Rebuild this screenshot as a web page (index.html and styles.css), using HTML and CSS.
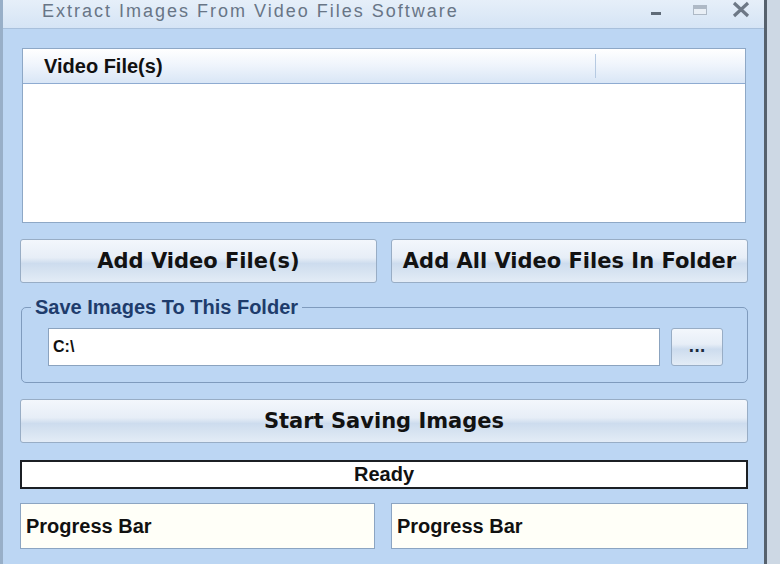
FILE: index.html
```html
<!DOCTYPE html>
<html lang="en">
<head>
  <meta charset="UTF-8">
  <title>Extract Images From Video Files Software</title>
  <link rel="stylesheet" href="styles.css">
</head>
<body>
  <div class="window">
    <div class="titlebar">
      <span class="title">Extract Images From Video Files Software</span>
      <div class="controls">
        <svg class="ctl-min" width="12" height="20" viewBox="0 0 12 20"><rect x="1" y="12" width="10" height="3" fill="#5f6b78"/></svg>
        <svg class="ctl-max" width="18" height="20" viewBox="0 0 18 20"><rect x="2.5" y="5.5" width="13" height="9" fill="#e9eff6" stroke="#aeb9c6"/><rect x="3" y="6" width="12" height="3" fill="#aeb9c6"/></svg>
        <svg class="ctl-close" width="20" height="20" viewBox="0 0 20 20"><path d="M3 3 L17 16 M17 3 L3 16" stroke="#6d7886" stroke-width="3.2"/></svg>
      </div>
    </div>

    <div class="content">
      <div class="filelist">
        <div class="list-header">
          <span class="col-name">Video File(s)</span>
          <span class="col-rest"></span>
        </div>
      </div>

      <div class="row buttons">
        <button class="btn big">Add Video File(s)</button>
        <button class="btn big">Add All Video Files In Folder</button>
      </div>

      <fieldset class="group">
        <legend>Save Images To This Folder</legend>
        <div class="folder-row">
          <input type="text" class="path" value="C:\">
          <button class="btn browse">...</button>
        </div>
      </fieldset>

      <button class="btn big start">Start Saving Images</button>

      <div class="status">Ready</div>

      <div class="row progress">
        <div class="bar">Progress Bar</div>
        <div class="bar">Progress Bar</div>
      </div>
    </div>
  </div>
</body>
</html>
```

FILE: styles.css
```css
body {
  margin: 0;
  background: #cdd8e4;
  font-family: "Liberation Sans", Arial, sans-serif;
}
.window {
  box-sizing: border-box;
  width: 767px;
  height: 564px;
  background: #bcd6f3; /* window body blue */
  border-left: 3px solid #98afc8;
  border-right: 3px solid #56616d;
  overflow: hidden;
}
.titlebar {
  height: 28px;
  border-bottom: 1px solid #a8c0dc;
  background: linear-gradient(#e6eff9, #d5e4f5);
  display: flex;
  align-items: center;
  justify-content: space-between;
}
.title {
  margin-left: 39px;
  margin-top: -6px;
  font-size: 18px;
  letter-spacing: 2px;
  color: #687586;
}
.controls {
  display: flex;
  align-items: flex-start;
  margin-right: 13px;
  margin-top: -8px;
}
.ctl-min { margin-right: 29px; }
.ctl-max { margin-right: 22px; }

.content {
  padding: 0 16px 0 17px;
  display: flex;
  flex-direction: column;
}
.filelist {
  margin: 19px 2px 0 2px;
  height: 175px;
  box-sizing: border-box;
  border: 1px solid #8ea8c6;
  background: #fff;
}
.list-header {
  height: 34px;
  display: flex;
  align-items: center;
  border-bottom: 1px solid #8eabd1;
  background: linear-gradient(#ffffff, #f0f5fc 45%, #d9e6f6);
}
.col-name {
  width: 573px;
  padding-left: 21px;
  box-sizing: border-box;
  font-size: 20px;
  font-weight: bold;
  color: #111;
  border-right: 1px solid #b6cae2;
  line-height: 24px;
}

.row {
  display: flex;
}
.buttons {
  margin-top: 16px;
  gap: 14px;
}
.btn {
  box-sizing: border-box;
  border: 1px solid #98adc5;
  border-radius: 3px;
  background: linear-gradient(#f3f7fc 0%, #e7eef7 42%, #cddcee 56%, #d9e5f2 80%, #e3ecf6 100%);
  color: #121212;
  font-family: "DejaVu Sans", Tahoma, sans-serif;
  font-weight: bold;
  padding: 0;
  cursor: pointer;
}
.big {
  height: 44px;
  font-size: 21px;
}
.buttons .btn {
  flex: 1;
}

.group {
  margin: 14px 0 0 1px;
  padding: 11px 24px 16px 26px;
  border: 1px solid #7f9bbd;
  border-radius: 5px;
  min-width: 0;
}
.group legend {
  margin-left: -17px;
  padding: 0 4px;
  font-size: 20px;
  line-height: 20px;
  font-weight: bold;
  color: #1e3c6c;
}
.folder-row {
  display: flex;
  gap: 11px;
}
.path {
  box-sizing: border-box;
  width: 612px;
  height: 38px;
  border: 1px solid #8ba3bf;
  background: #fff;
  padding: 0 4px;
  font-family: "Liberation Sans", Arial, sans-serif;
  font-size: 16px;
  font-weight: bold;
  color: #111;
  outline: none;
}
.browse {
  width: 52px;
  height: 38px;
  font-size: 15px;
  color: #1c2a3c;
}

.start {
  margin-top: 16px;
}

.status {
  margin-top: 17px;
  height: 29px;
  box-sizing: border-box;
  border: 2px solid #1b1f24;
  background: #fff;
  text-align: center;
  font-size: 20px;
  font-weight: bold;
  line-height: 25px;
  color: #111;
}

.progress {
  margin-top: 14px;
  gap: 16px;
}
.bar {
  box-sizing: border-box;
  height: 46px;
  border: 1px solid #8ca5c2;
  background: #fffff8;
  padding-left: 5px;
  font-size: 20px;
  font-weight: bold;
  line-height: 44px;
  color: #111;
}
.bar:first-child { width: 355px; }
.bar:last-child { width: 357px; }
```
